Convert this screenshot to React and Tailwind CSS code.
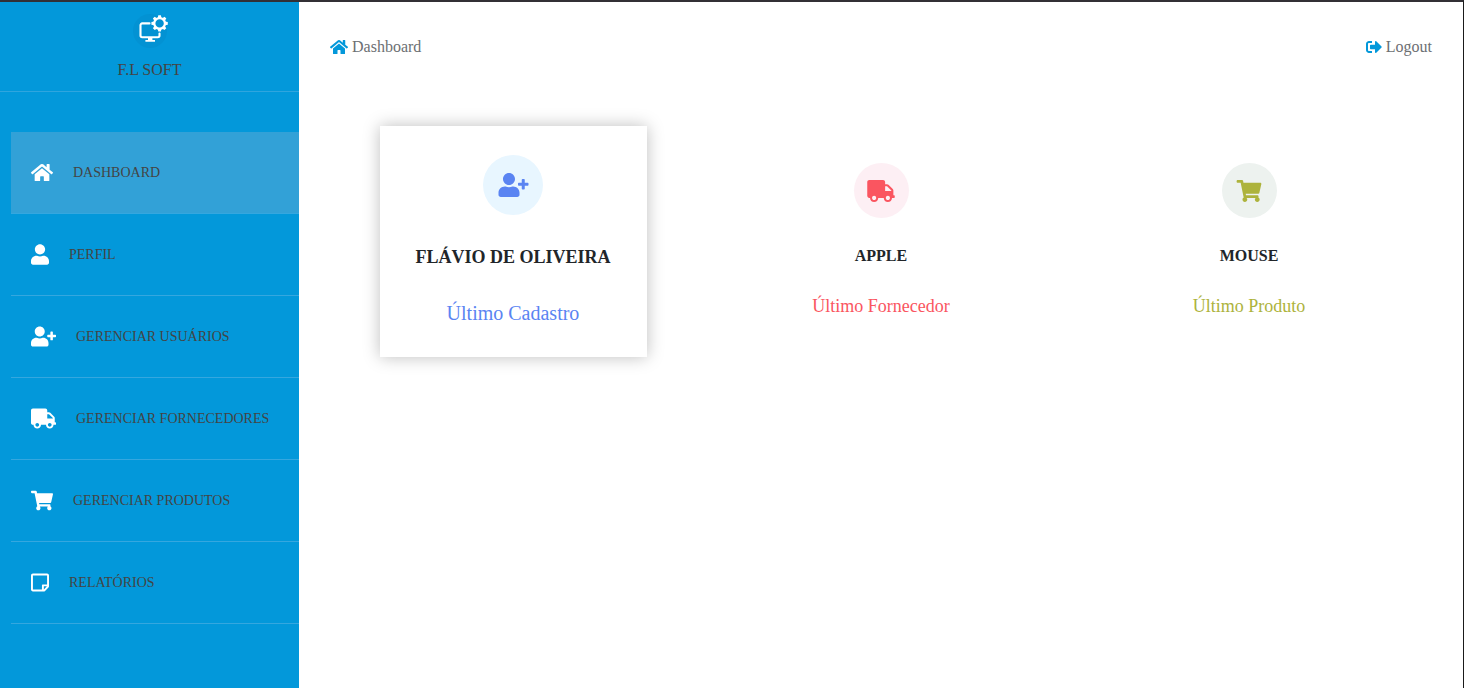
import React from "react";
import {
  FaHome,
  FaUser,
  FaUserPlus,
  FaTruck,
  FaShoppingCart,
  FaRegStickyNote,
  FaSignOutAlt,
} from "react-icons/fa";

const menu = [
  { label: "DASHBOARD", Icon: FaHome, width: "w-[22px]", active: true },
  { label: "PERFIL", Icon: FaUser, width: "w-[18px]" },
  { label: "GERENCIAR USUÁRIOS", Icon: FaUserPlus, width: "w-[25px]" },
  { label: "GERENCIAR FORNECEDORES", Icon: FaTruck, width: "w-[25px]" },
  { label: "GERENCIAR PRODUTOS", Icon: FaShoppingCart, width: "w-[22px]" },
  { label: "RELATÓRIOS", Icon: FaRegStickyNote, width: "w-[18px]" },
];

const gearTeeth = [0, 45, 90, 135, 180, 225, 270, 315];

function Logo() {
  return (
    <svg className="h-[38px] w-[38px]" viewBox="0 0 38 38" fill="none" aria-hidden="true">
      <circle cx="19" cy="21" r="17" fill="#0392d3" />
      <path
        d="M18.5 13.4H11.2a1.7 1.7 0 0 0-1.7 1.7v10.4a1.7 1.7 0 0 0 1.7 1.7h15.6a1.7 1.7 0 0 0 1.7-1.7V23.6"
        stroke="#fff"
        strokeWidth="2.1"
        strokeLinecap="round"
      />
      <path d="M17 27.5h4.4v2.4h2.6v1.9h-9.6v-1.9h2.6z" fill="#fff" />
      <circle cx="28.6" cy="13.4" r="5.3" stroke="#fff" strokeWidth="2.2" />
      {gearTeeth.map((a) => (
        <path key={a} d="M26.7 8.2l.6-3h2.6l.6 3z" fill="#fff" transform={`rotate(${a} 28.6 13.4)`} />
      ))}
    </svg>
  );
}

function Sidebar() {
  return (
    <aside className="w-[299px] shrink-0 bg-[#0398da] text-[#444]">
      <div className="flex flex-col items-center border-b border-[#2fa5de] pt-2 pb-[9px]">
        <Logo />
        <span className="mt-[10px] text-base leading-6">F.L SOFT</span>
      </div>
      <nav className="mt-10 ml-[11px]">
        <ul>
          {menu.map(({ label, Icon, width, active }) => (
            <li key={label}>
              <a
                href="#"
                className={`flex h-[82px] items-center gap-5 border-b border-[#35a7df] pl-5 text-sm ${active ? "bg-[#32a1d7]" : ""}`}
              >
                <Icon className={`h-[21px] shrink-0 text-white ${width}`} />
                {label}
              </a>
            </li>
          ))}
        </ul>
      </nav>
    </aside>
  );
}

function Card({ Icon, title, caption, circle, color, featured }) {
  return (
    <article
      className={`flex flex-col items-center text-center ${
        featured
          ? "w-[267px] bg-white px-4 pt-[29px] pb-[30px] shadow-[0_0_16px_rgba(0,0,0,0.26)]"
          : "w-[243px] px-4 pt-[26px] pb-7"
      }`}
    >
      <div className={`flex items-center justify-center rounded-full ${circle} ${color} ${featured ? "size-[60px]" : "size-[55px]"}`}>
        <Icon className={featured ? "h-6 w-[31px]" : "h-[22px] w-7"} />
      </div>
      <h2 className={`font-bold text-[#212529] ${featured ? "mt-7 text-lg leading-7" : "mt-[26px] text-base leading-6"}`}>
        {title}
      </h2>
      <p className={`${color} ${featured ? "mt-7 text-xl leading-7" : "mt-[26px] text-lg leading-6"}`}>{caption}</p>
    </article>
  );
}

export default function App() {
  return (
    <div className="flex min-h-screen border-t-2 border-r border-t-[#323035] border-r-[#1a1a1a] bg-white font-['Liberation_Serif',serif]">
      <Sidebar />
      <main className="min-w-0 flex-1 px-[30px]">
        <header className="flex items-center justify-between px-px pt-[33px] text-base leading-6 text-[#6c6f73]">
          <a href="#" className="flex items-center gap-1">
            <FaHome className="h-4 w-[18px] text-[#0398da]" />
            Dashboard
          </a>
          <a href="#" className="flex items-center gap-1">
            <FaSignOutAlt className="size-4 text-[#0398da]" />
            Logout
          </a>
        </header>
        <section className="mt-[67px] grid grid-cols-3 items-center justify-items-center">
          <Card
            featured
            Icon={FaUserPlus}
            title="FLÁVIO DE OLIVEIRA"
            caption="Último Cadastro"
            circle="bg-[#e8f6ff]"
            color="text-[#5a84f2]"
          />
          <Card
            Icon={FaTruck}
            title="APPLE"
            caption="Último Fornecedor"
            circle="bg-[#fdeff4]"
            color="text-[#fa5560]"
          />
          <Card
            Icon={FaShoppingCart}
            title="MOUSE"
            caption="Último Produto"
            circle="bg-[#edf2ef]"
            color="text-[#adb33c]"
          />
        </section>
      </main>
    </div>
  );
}
